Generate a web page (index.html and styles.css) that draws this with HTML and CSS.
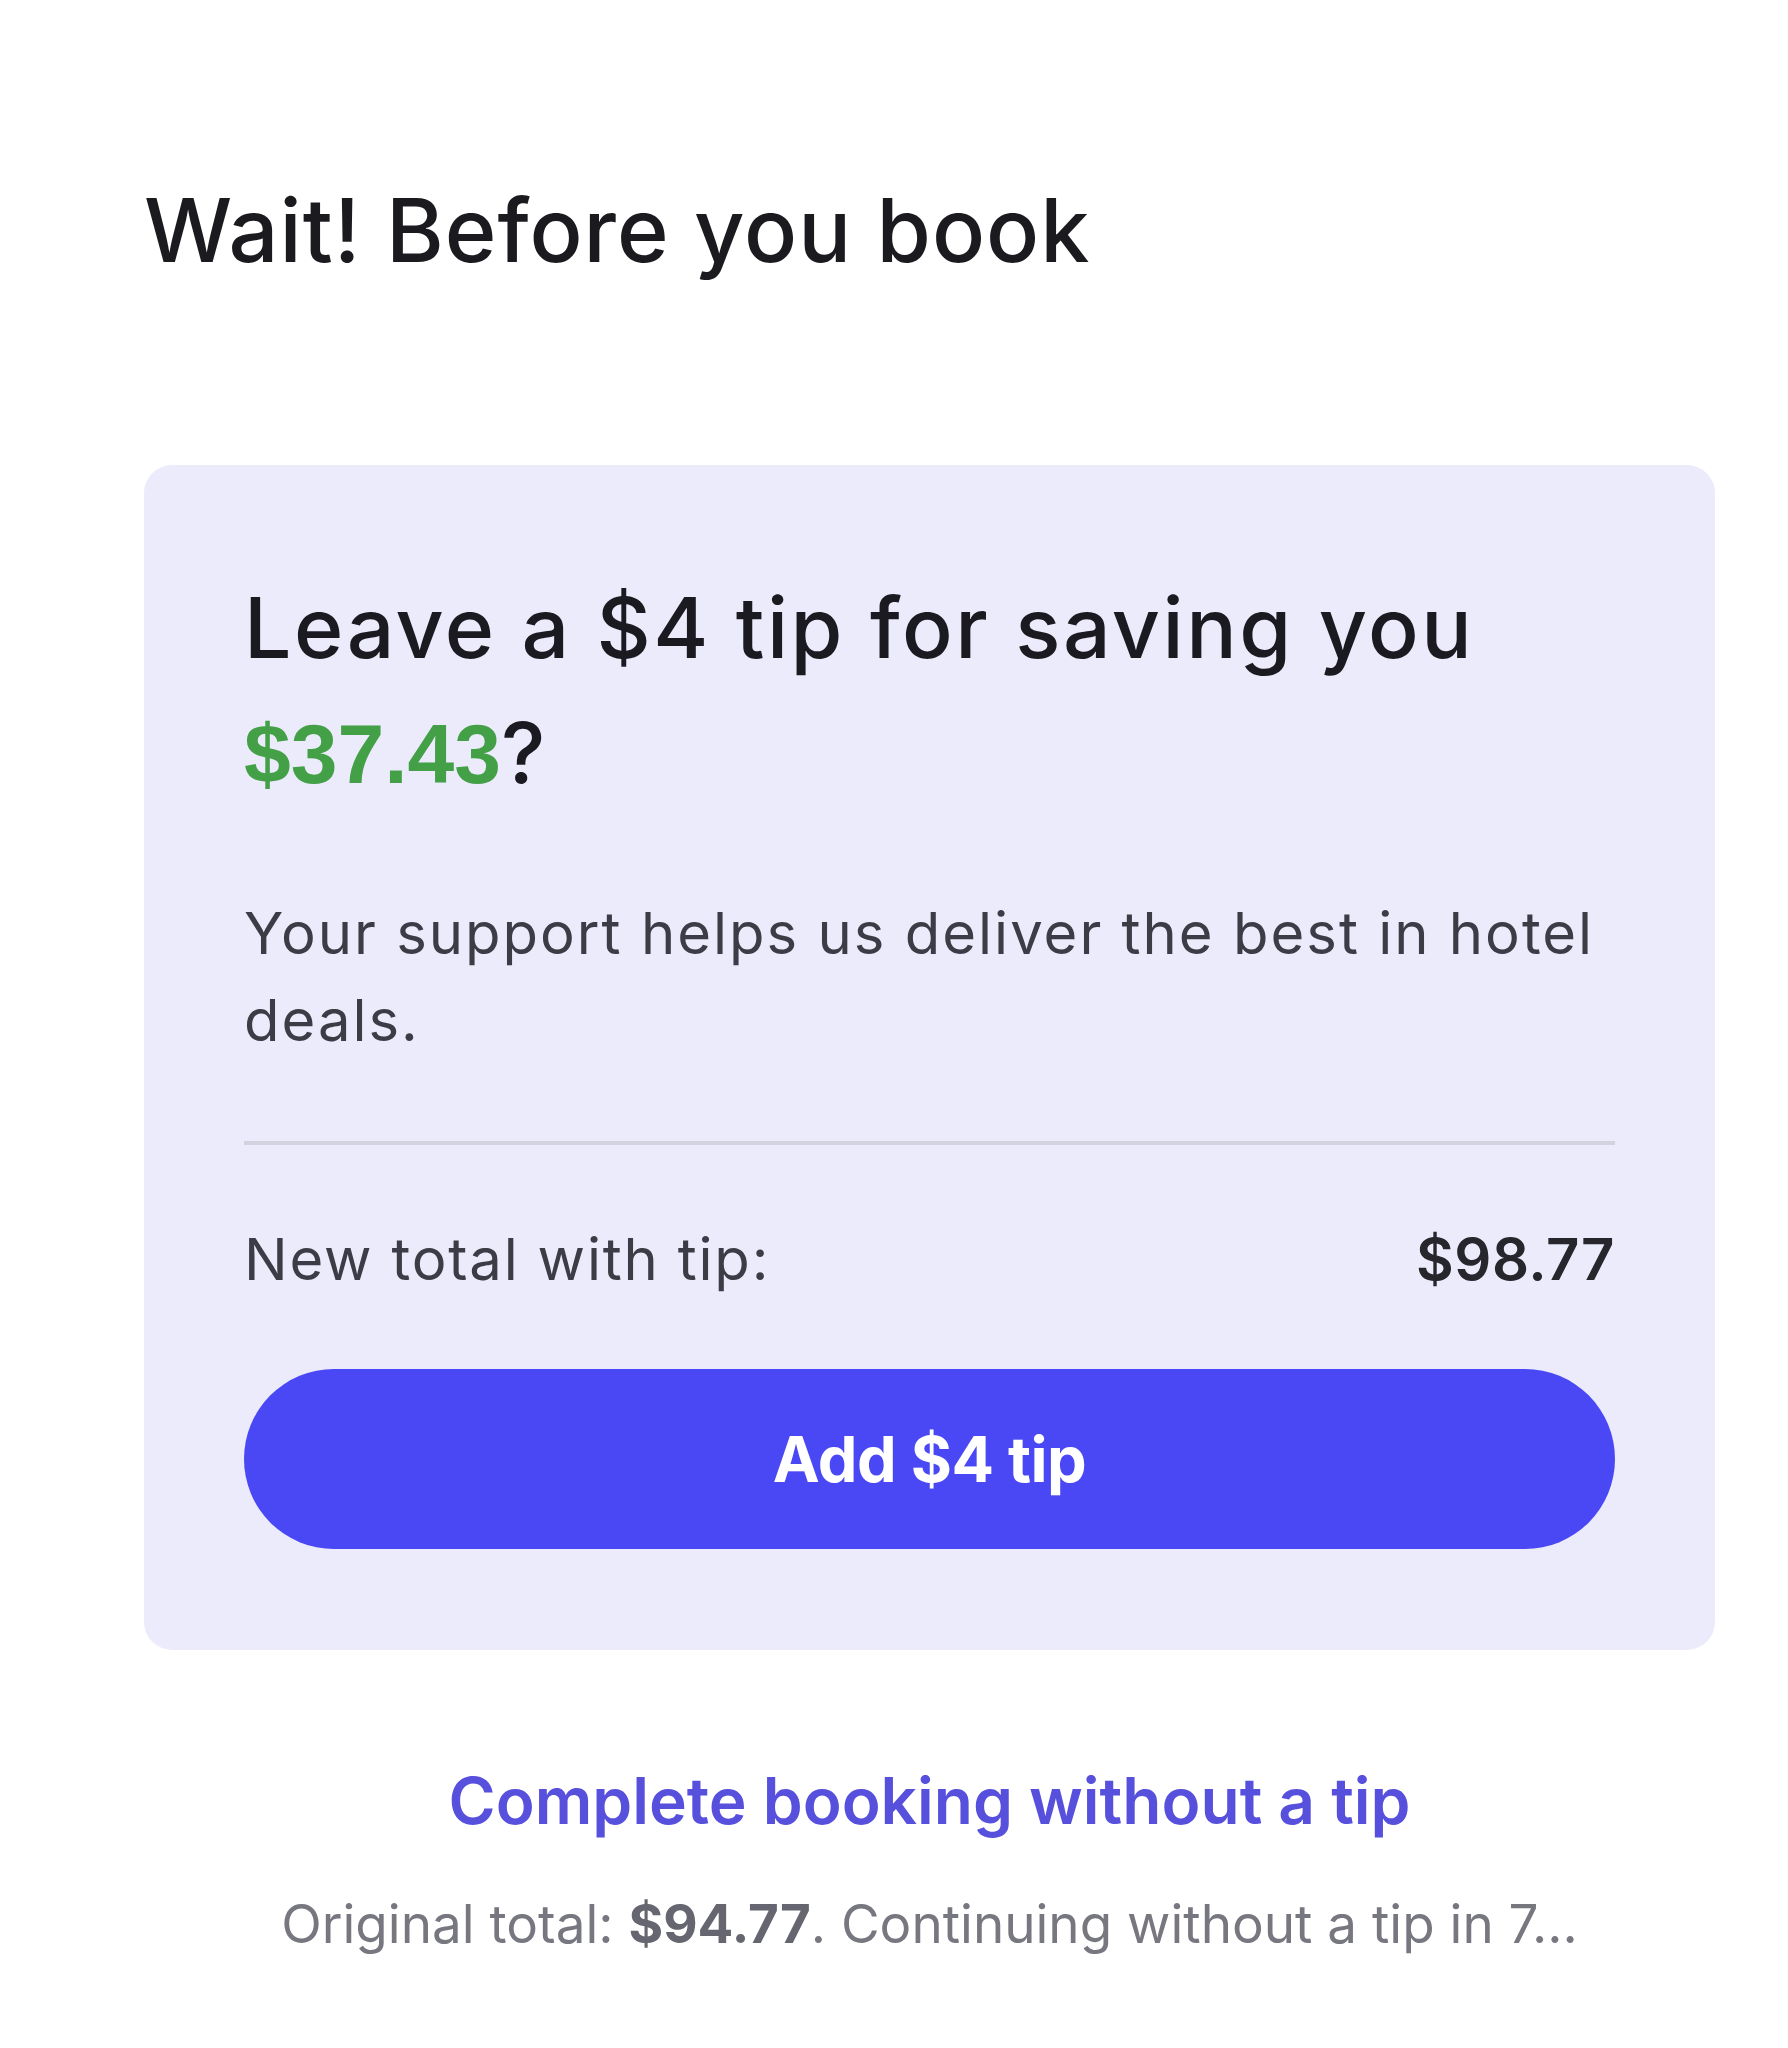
FILE: index.html
```html
<!DOCTYPE html>
<html lang="en">
<head>
<meta charset="utf-8">
<title>Wait! Before you book</title>
<link rel="stylesheet" href="styles.css">
</head>
<body>
<main class="page">
  <h1 class="heading">Wait! Before you book</h1>
  <section class="card">
    <h2 class="card-title">Leave a $4 tip for saving you <span class="saving">$37.43</span>?</h2>
    <p class="card-text">Your support helps us deliver the best in hotel deals.</p>
    <hr class="divider">
    <div class="total-row">
      <span class="total-label">New total with tip:</span>
      <span class="total-value">$98.77</span>
    </div>
    <button class="tip-button" type="button">Add $4 tip</button>
  </section>
  <div class="footer">
    <a class="skip-link" href="#">Complete booking without a tip</a>
    <p class="footnote">Original total: <strong>$94.77</strong>. Continuing without a tip in 7...</p>
  </div>
</main>
</body>
</html>
```

FILE: styles.css
```css
* { box-sizing: border-box; }
html, body { margin: 0; padding: 0; background: #ffffff; }
body {
  font-family: "Inter", "Open Sans", "Liberation Sans", sans-serif;
  color: #1c1c22;
}
.page {
  width: 1571px;
  margin-left: 144px;
  padding-top: 170px;
}
.heading {
  margin: 0;
  font-size: 88px;
  line-height: 120px;
  font-weight: 500;
  letter-spacing: 1px;
  color: #1b1b1f;
}
.card {
  margin-top: 175px;
  background: #ecebfc;
  border-radius: 28px;
  padding: 100px 100px 101px;
  display: flex;
  flex-direction: column;
}
.card-title {
  margin: 0;
  font-size: 84px;
  line-height: 125px;
  font-weight: 500;
  letter-spacing: 2.5px;
  color: #1a1a20;
}
.saving {
  color: #43a047;
  font-family: "Liberation Sans", Arial, sans-serif;
  font-weight: 700;
  letter-spacing: 0;
}
.card-text {
  margin: 73px 0 0;
  font-size: 58px;
  line-height: 87px;
  font-weight: 400;
  letter-spacing: 2px;
  color: #3c3c46;
}
.divider {
  margin: 77px 0 0;
  border: 0;
  height: 4px;
  background: #d3d2de;
}
.total-row {
  margin-top: 74px;
  display: flex;
  justify-content: space-between;
  align-items: baseline;
  font-size: 58px;
  line-height: 80px;
}
.total-label { color: #3c3c46; letter-spacing: 1.8px; }
.total-value {
  font-weight: 600;
  letter-spacing: 0.5px;
  color: #26262c;
}
.tip-button {
  margin-top: 70px;
  height: 180px;
  border: 0;
  border-radius: 90px;
  background: #4a48f4;
  color: #ffffff;
  font-family: inherit;
  font-size: 63px;
  font-weight: 700;
  letter-spacing: -0.5px;
}
.footer {
  display: flex;
  flex-direction: column;
  align-items: center;
}
.skip-link {
  margin-top: 106px;
  font-size: 64px;
  line-height: 90px;
  font-weight: 600;
  color: #5650dd;
  text-decoration: none;
}
.footnote {
  margin: 38px 0 0;
  font-size: 53px;
  line-height: 80px;
  color: #777780;
}
.footnote strong {
  font-weight: 700;
  color: #666670;
}
```
